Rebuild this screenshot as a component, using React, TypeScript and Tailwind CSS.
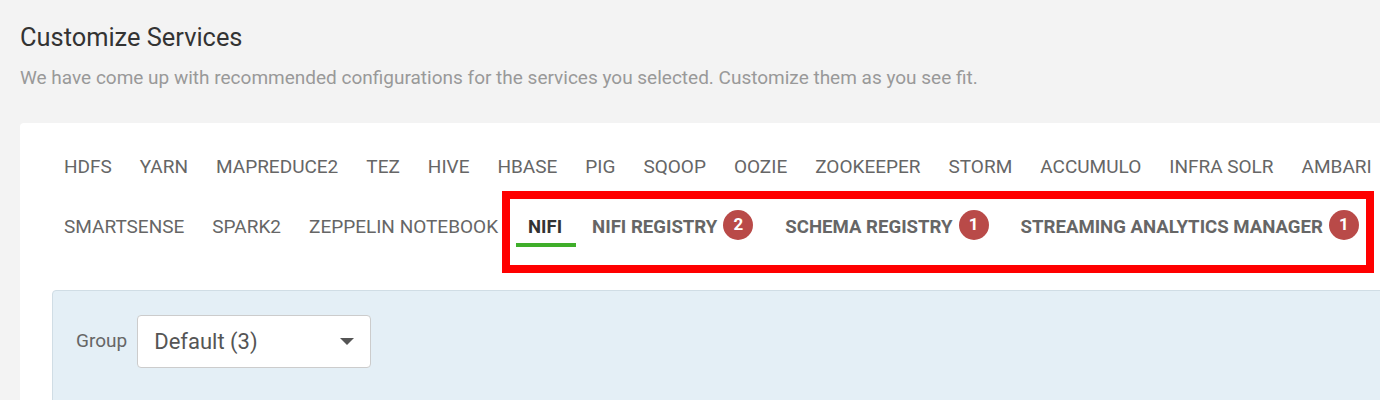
import React from 'react'

interface Tab {
  name: string
  badge?: number
  active?: boolean
}

const rowOne: Tab[] = [
  { name: 'HDFS' },
  { name: 'YARN' },
  { name: 'MAPREDUCE2' },
  { name: 'TEZ' },
  { name: 'HIVE' },
  { name: 'HBASE' },
  { name: 'PIG' },
  { name: 'SQOOP' },
  { name: 'OOZIE' },
  { name: 'ZOOKEEPER' },
  { name: 'STORM' },
  { name: 'ACCUMULO' },
  { name: 'INFRA SOLR' },
  { name: 'AMBARI' },
]

const rowTwo: Tab[] = [
  { name: 'SMARTSENSE' },
  { name: 'SPARK2' },
  { name: 'ZEPPELIN NOTEBOOK' },
  { name: 'NIFI', active: true },
  { name: 'NIFI REGISTRY', badge: 2 },
  { name: 'SCHEMA REGISTRY', badge: 1 },
  { name: 'STREAMING ANALYTICS MANAGER', badge: 1 },
]

function ServiceTab({ tab }: { tab: Tab }) {
  const hasBadge = tab.badge !== undefined
  return (
    <div
      className={
        'relative h-[60px] shrink-0 pt-[18px] ' +
        (tab.active ? 'pl-[16px] pr-[14px]' : hasBadge ? 'px-[16px]' : 'px-[14px]')
      }
    >
      <div className="flex h-[24px] items-center">
        <span
          className={
            'whitespace-nowrap leading-[24px] ' +
            (tab.active
              ? 'text-[18.5px] font-bold text-[#333]'
              : hasBadge
                ? 'text-[18.6px] font-bold text-[#666]'
                : 'text-[19px] text-[#666]')
          }
        >
          {tab.name}
        </span>
        {hasBadge && (
          <span className="relative -top-[2px] ml-[6px] flex h-[30px] w-[30px] shrink-0 items-center justify-center rounded-full bg-[#b94a48] text-[17px] font-bold text-white">
            {tab.badge}
          </span>
        )}
      </div>
      {tab.active && (
        <div className="absolute bottom-[10px] left-[4px] right-0 h-[4px] bg-[#3fae2a]" />
      )}
    </div>
  )
}

export default function App() {
  return (
    <div className="relative h-[400px] overflow-hidden bg-[#f3f3f3] font-['Roboto',sans-serif]">
      <div className="pl-5 pt-[22px]">
        <h2 className="text-[25.4px] leading-[30px] text-[#333]">Customize Services</h2>
        <p className="mt-[14px] text-[19px] leading-[24px] text-[#999]">
          We have come up with recommended configurations for the services you selected. Customize them as you see fit.
        </p>
      </div>

      <div className="ml-5 mt-[33px] w-[1440px] rounded-[4px] bg-white pl-[30px] pt-[14px]">
        <div className="flex">
          {rowOne.map((t) => (
            <ServiceTab key={t.name} tab={t} />
          ))}
        </div>
        <div className="flex">
          {rowTwo.map((t) => (
            <ServiceTab key={t.name} tab={t} />
          ))}
        </div>

        <div className="ml-[2px] mt-[33px] h-[200px] rounded-[4px] border border-[#d0dde5] bg-[#e4eff6] pl-[23px] pt-[24px]">
          <div className="flex items-center gap-[10px]">
            <span className="text-[19px] text-[#666]">Group</span>
            <div className="flex h-[53px] w-[234px] items-center justify-between rounded-[4px] border border-[#ccc] bg-white pl-[16px] pr-[16px]">
              <span className="text-[22px] text-[#555]">Default (3)</span>
              <svg width="14" height="7" viewBox="0 0 14 7">
                <path d="M0 0 L14 0 L7 7 Z" fill="#555" />
              </svg>
            </div>
          </div>
        </div>
      </div>

      {/* annotation box */}
      <div className="absolute left-[502px] top-[191px] h-[82px] w-[872px] border-[8px] border-[#ff0000]" />
    </div>
  )
}
